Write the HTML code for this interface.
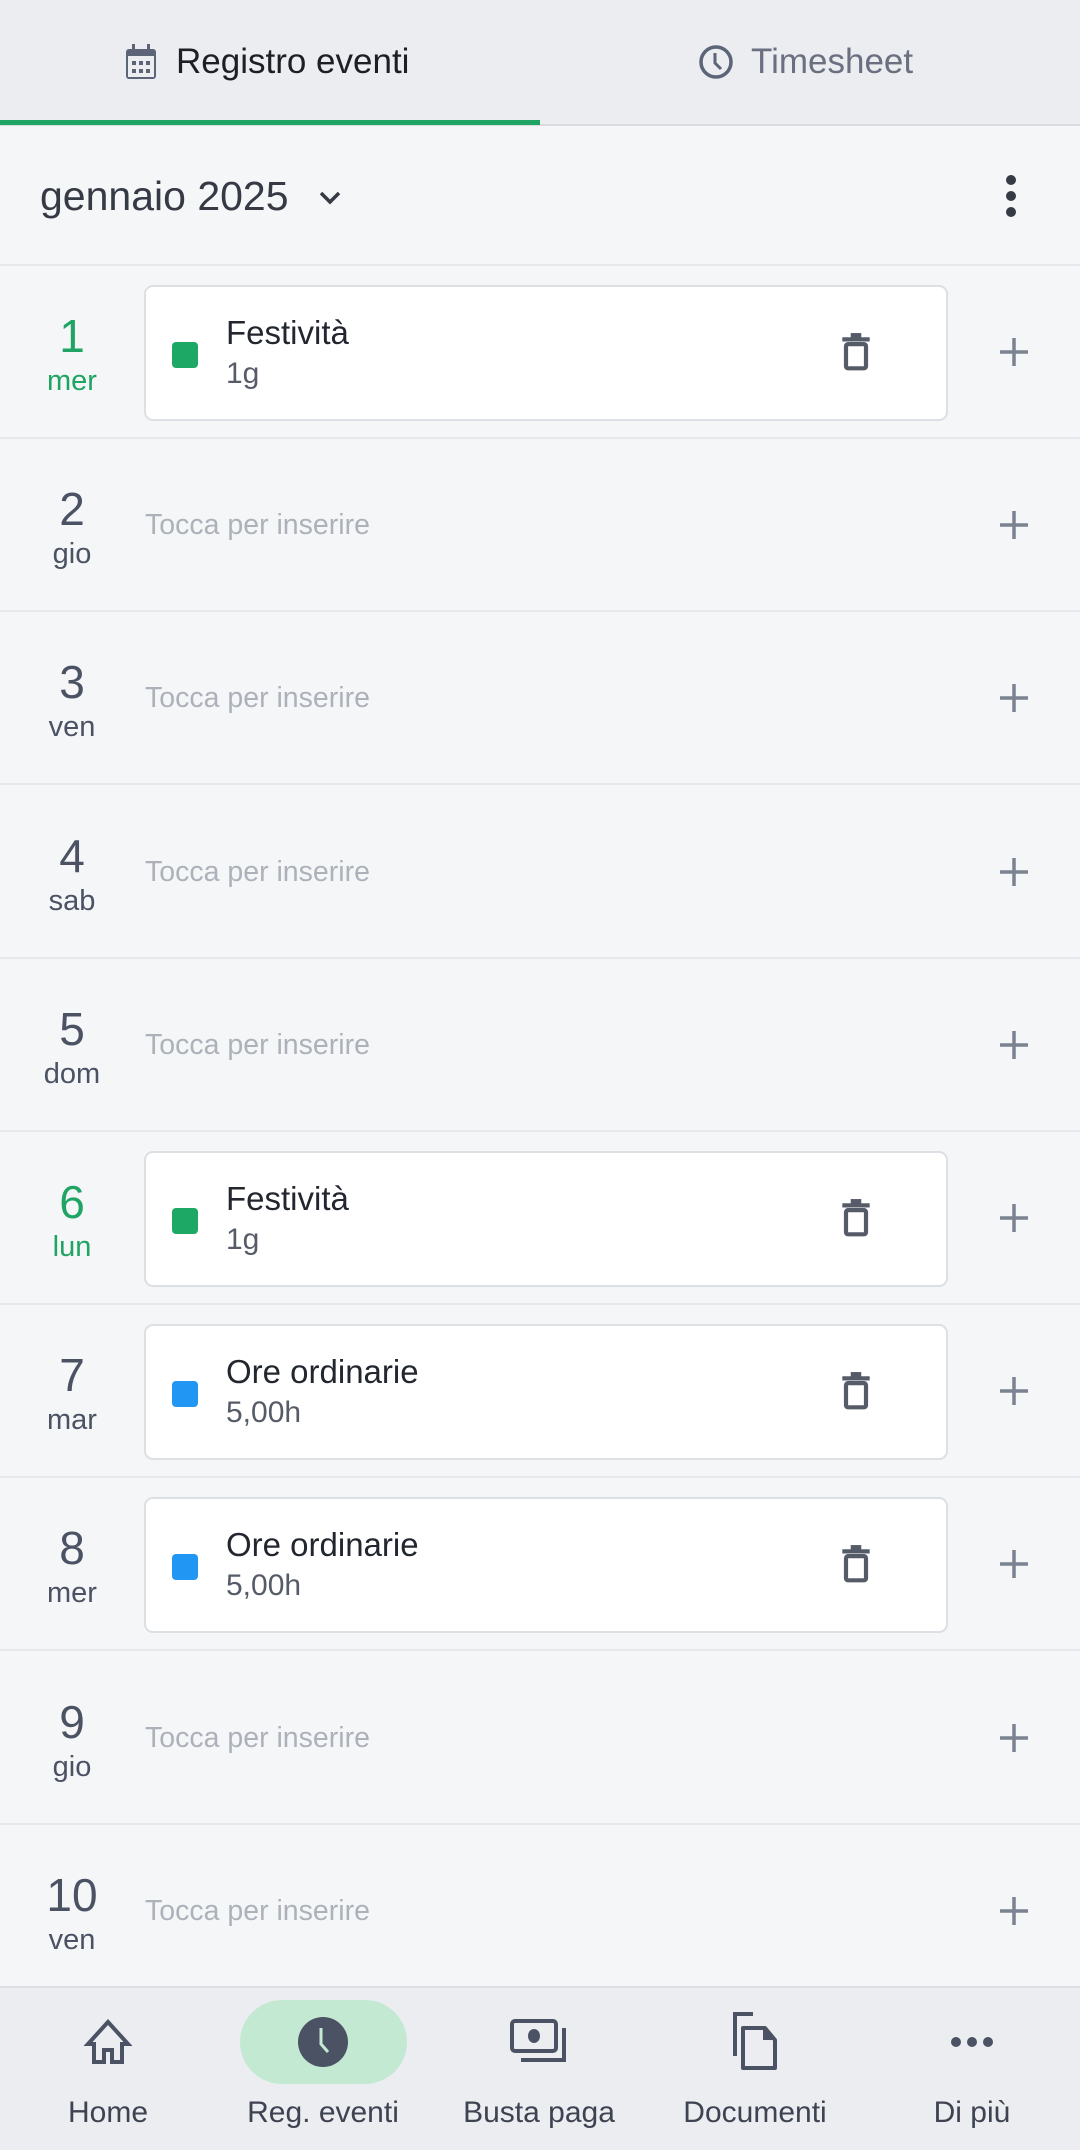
<!DOCTYPE html>
<html><head><meta charset="utf-8"><style>
*{margin:0;padding:0;box-sizing:border-box}
body{width:1080px;height:2150px;background:#f5f6f8;font-family:"Liberation Sans",sans-serif;position:relative;overflow:hidden;color:#3d4350}
.tabs{position:absolute;top:0;left:0;width:1080px;height:126px;background:#ecedf1;border-bottom:2px solid #d9dbe0}
.tab{position:absolute;top:0;height:124px;display:flex;align-items:center;font-size:35px}
.ind{position:absolute;left:0;top:120px;width:540px;height:5px;background:#1fa463}
.hdr{position:absolute;top:126px;left:0;width:1080px;height:140px;border-bottom:2px solid #e6e8eb}
.row{position:absolute;left:0;width:1080px;height:173px;border-bottom:2px solid #e6e8eb}
.day{position:absolute;left:22px;width:100px;text-align:center;top:44px}
.day .n{font-size:46px;line-height:52px;color:#4b5263}
.day .w{font-size:29px;line-height:38px;color:#4b5263}
.day.g .n,.day.g .w{color:#1fa463}
.ph{position:absolute;left:145px;top:70px;font-size:28.5px;color:#adb2ba}
.card{position:absolute;left:144px;top:19px;width:804px;height:136px;background:#fff;border:2px solid #dcdfe3;border-radius:9px}
.sq{position:absolute;left:26px;top:55px;width:26px;height:26px;border-radius:4px}
.t1{position:absolute;left:80px;top:27px;font-size:33px;color:#22262e}
.t2{position:absolute;left:80px;top:70px;font-size:30px;color:#555c68}
.trash{position:absolute;left:694px;top:45px}
.plus{position:absolute;left:996px;top:68px}
.nav{position:absolute;top:1986px;left:0;width:1080px;height:164px;background:#ecedf1;border-top:2px solid #dcdee2}
.ni{position:absolute;top:0;width:216px;text-align:center}
.ni .ic{position:absolute;top:24px;left:0;width:216px;height:60px;display:flex;justify-content:center;align-items:center}
.ni .lb{position:absolute;top:108px;width:216px;font-size:30px;color:#3d4350}
</style></head><body>
<div class="tabs">
 <div class="tab" style="left:125px;color:#1c1f25"><svg width="32" height="36" viewBox="0 0 32 36" style="margin-right:19px"><rect x="1" y="5" width="30" height="30" rx="3" fill="#5c6478"/><rect x="7" y="0" width="3" height="8" fill="#5c6478"/><rect x="22" y="0" width="3" height="8" fill="#5c6478"/><rect x="3" y="12" width="26" height="21" fill="#ecedf1"/><g fill="#5c6478"><rect x="7" y="17" width="4" height="4"/><rect x="14" y="17" width="4" height="4"/><rect x="21" y="17" width="4" height="4"/><rect x="7" y="25" width="4" height="4"/><rect x="14" y="25" width="4" height="4"/><rect x="21" y="25" width="4" height="4"/></g></svg>Registro eventi</div>
 <div class="tab" style="left:698px;color:#6a7080"><svg width="36" height="36" viewBox="0 0 36 36" style="margin-right:17px"><circle cx="18" cy="18" r="15" fill="none" stroke="#5c6478" stroke-width="3.5"/><path d="M17 9v10l6 6" fill="none" stroke="#5c6478" stroke-width="3"/></svg>Timesheet</div>
 <div class="ind"></div>
</div>
<div class="hdr">
 <div style="position:absolute;left:40px;top:47px;font-size:41px;color:#353a45">gennaio 2025</div>
 <svg style="position:absolute;left:318px;top:62px" width="24" height="20" viewBox="0 0 24 20"><path d="M3 5l9 9 9-9" fill="none" stroke="#353a45" stroke-width="3.5"/></svg>
 <svg style="position:absolute;left:1003px;top:48px" width="16" height="44" viewBox="0 0 16 44"><circle cx="8" cy="6" r="5" fill="#353a45"/><circle cx="8" cy="22" r="5" fill="#353a45"/><circle cx="8" cy="38" r="5" fill="#353a45"/></svg>
</div>

<div id="rows"></div>
<script>
var data=[["1","mer",1,"Festività","1g","#1ea866"],["2","gio",0],["3","ven",0],["4","sab",0],["5","dom",0],["6","lun",1,"Festività","1g","#1ea866"],["7","mar",0,"Ore ordinarie","5,00h","#2196f3"],["8","mer",0,"Ore ordinarie","5,00h","#2196f3"],["9","gio",0],["10","ven",0]];
var h="";
data.forEach(function(d,i){
 var top=266+i*173.2;
 h+='<div class="row" style="top:'+top+'px"><div class="day'+(d[2]?' g':'')+'"><div class="n">'+d[0]+'</div><div class="w">'+d[1]+'</div></div>';
 if(d[3]){h+='<div class="card"><div class="sq" style="background:'+d[5]+'"></div><div class="t1">'+d[3]+'</div><div class="t2">'+d[4]+'</div><svg class="trash" width="32" height="40" viewBox="0 0 30 38"><rect x="2" y="5" width="26" height="4" fill="#555c68"/><rect x="10" y="1" width="10" height="5" fill="#555c68"/><rect x="5.5" y="11.5" width="19" height="23" rx="2" fill="none" stroke="#555c68" stroke-width="4"/></svg></div>';}
 else h+='<div class="ph">Tocca per inserire</div>';
 h+='<svg class="plus" width="36" height="36" viewBox="0 0 36 36"><path d="M18 4v28M4 18h28" stroke="#7b8290" stroke-width="3.5"/></svg></div>';
});
document.getElementById("rows").innerHTML=h;
</script>

<div class="nav">
 <div style="position:absolute;left:240px;top:12px;width:167px;height:84px;border-radius:42px;background:#c3e9d3"></div>
 <div class="ni" style="left:0"><div class="ic"><svg width="52" height="48" viewBox="0 0 52 48"><path d="M26 4L6 26h6v18h10V32h8v12h10V26h6z" fill="none" stroke="#4b5263" stroke-width="4" stroke-linejoin="miter"/></svg></div><div class="lb">Home</div></div>
 <div class="ni" style="left:215px"><div class="ic"><svg width="52" height="52" viewBox="0 0 52 52"><circle cx="26" cy="26" r="25" fill="#4b5263"/><path d="M24 12v16l7 8" fill="none" stroke="#c3e9d3" stroke-width="3"/></svg></div><div class="lb">Reg. eventi</div></div>
 <div class="ni" style="left:431px"><div class="ic"><svg width="60" height="48" viewBox="0 0 60 48"><rect x="3" y="3" width="44" height="30" rx="3" fill="none" stroke="#4b5263" stroke-width="4"/><ellipse cx="25" cy="18" rx="6" ry="7" fill="#4b5263"/><path d="M55 10v32H12" fill="none" stroke="#4b5263" stroke-width="4"/></svg></div><div class="lb">Busta paga</div></div>
 <div class="ni" style="left:647px"><div class="ic"><svg width="52" height="60" viewBox="0 0 52 60"><path d="M24 2H6v42" fill="none" stroke="#4b5263" stroke-width="4"/><path d="M14 16h22l10 12v28H14z" fill="none" stroke="#4b5263" stroke-width="4" stroke-linejoin="round"/><path d="M34 16v12h12" fill="#4b5263"/></svg></div><div class="lb">Documenti</div></div>
 <div class="ni" style="left:864px"><div class="ic"><svg width="46" height="14" viewBox="0 0 46 14"><circle cx="7" cy="7" r="5" fill="#4b5263"/><circle cx="23" cy="7" r="5" fill="#4b5263"/><circle cx="39" cy="7" r="5" fill="#4b5263"/></svg></div><div class="lb">Di più</div></div>
</div>
</body></html>
